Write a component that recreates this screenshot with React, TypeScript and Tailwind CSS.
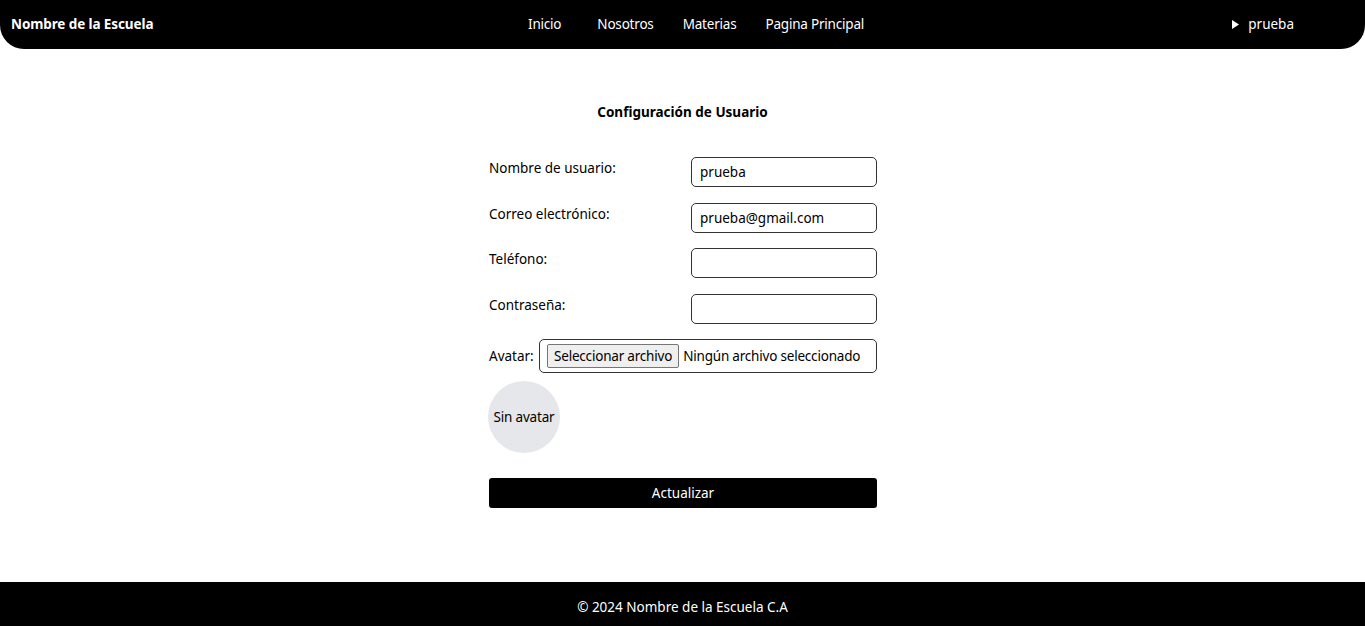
const font = { fontFamily: '"Noto Sans", "Open Sans", sans-serif' };

const Field = ({ label, value }: { label: string; value?: string }) => {
  return (
    <div className="flex items-start justify-between">
      <label className="pt-[1px] text-[13.5px] leading-[20px]">{label}</label>
      <input
        type="text"
        defaultValue={value}
        className="h-[30px] w-[186px] rounded-[5px] border border-[#333] px-2 text-[13.5px] text-black outline-none"
      />
    </div>
  );
};

export default function App() {
  return (
    <div className="flex min-h-screen flex-col bg-white text-black" style={font}>
      <header className="flex h-[49px] items-center rounded-b-3xl bg-black pl-[11px] pr-[71px] text-white">
        <p className="w-[300px] text-[13.5px] font-bold tracking-[-0.1px]">Nombre de la Escuela</p>
        <nav className="ml-[217px] flex items-center text-[13.5px] tracking-[-0.2px]">
          <a className="mr-[36px]">Inicio</a>
          <a className="mr-[29px]">Nosotros</a>
          <a className="mr-[29px]">Materias</a>
          <a>Pagina Principal</a>
        </nav>
        <div className="ml-auto flex items-center gap-[9px] text-[13.5px]">
          <svg width="7" height="9" viewBox="0 0 7 9" className="fill-white">
            <path d="M0 0 L7 4.5 L0 9 Z" />
          </svg>
          <span>prueba</span>
        </div>
      </header>

      <main className="flex flex-1 flex-col items-center">
        <h1 className="mt-[53px] text-[13.5px] font-bold">Configuración de Usuario</h1>
        <form className="ml-[1px] mt-[35px] flex w-[388px] flex-col gap-[15.5px]">
          <Field label="Nombre de usuario:" value="prueba" />
          <Field label="Correo electrónico:" value="prueba@gmail.com" />
          <Field label="Teléfono:" />
          <Field label="Contraseña:" />
          <div className="flex items-center justify-between">
            <label className="text-[13.5px]">Avatar:</label>
            <div className="flex h-[34px] w-[338px] items-center whitespace-nowrap rounded-[5px] border border-[#333] pl-[7px] text-[13.5px] tracking-[-0.2px]">
              <span className="mr-[4px] rounded-[2px] border border-[#767676] bg-[#efefef] px-[6px] leading-[22px]">
                Seleccionar archivo
              </span>
              <span>Ningún archivo seleccionado</span>
            </div>
          </div>
          <div className="-ml-[1px] -mt-[8px] flex h-[72px] w-[72px] items-center justify-center rounded-full bg-gray-200 text-[13.5px] tracking-[-0.2px]">
            Sin avatar
          </div>
          <button
            type="button"
            className="mt-[10px] h-[30px] w-full rounded-[3px] bg-black text-[13.5px] text-white"
          >
            Actualizar
          </button>
        </form>
      </main>

      <footer className="flex h-[44px] items-center justify-center bg-black pt-[6px] text-[13.5px] text-white">
        © 2024 Nombre de la Escuela C.A
      </footer>
    </div>
  );
}
